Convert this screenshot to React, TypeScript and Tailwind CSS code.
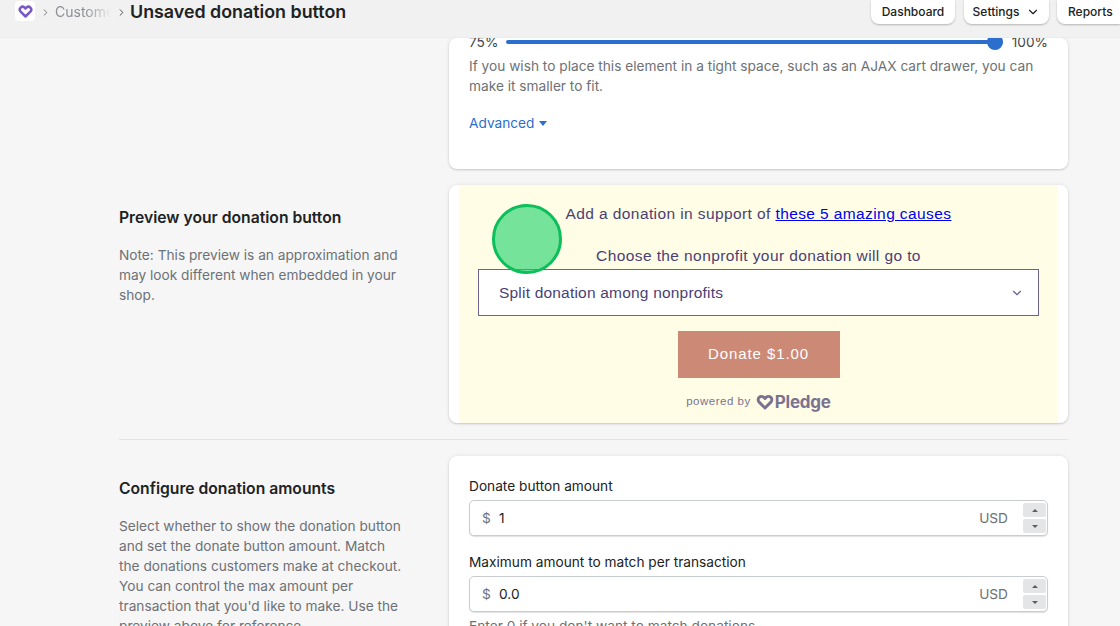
import { ChevronDown, ChevronRight } from 'lucide-react'

function HeartLogo({ className }: { className: string }) {
  return (
    <svg viewBox="0 0 24 24" className={className} fill="none" stroke="currentColor" strokeWidth="4" strokeLinejoin="round">
      <path d="M12 20 4.2 12.2a4.6 4.6 0 0 1 0-6.4 4.6 4.6 0 0 1 6.4 0L12 7.2l1.4-1.4a4.6 4.6 0 0 1 6.4 0 4.6 4.6 0 0 1 0 6.4L12 20Z" />
    </svg>
  )
}

function Section({ title, children, card, cardClass }: { title: string; children: React.ReactNode; card: React.ReactNode; cardClass: string }) {
  return (
    <div className="flex">
      <div className="w-[330px] shrink-0 pr-[45px] pt-[23px]">
        <h2 className="text-[15.7px] leading-[20px] font-semibold text-[#202223]">{title}</h2>
        {children}
      </div>
      <div className={`w-[619px] rounded-lg bg-white shadow-[0_0_4px_rgba(23,24,24,0.08),0_1px_2px_rgba(0,0,0,0.15)] ${cardClass}`}>{card}</div>
    </div>
  )
}

function AmountField({ label, value }: { label: string; value: string }) {
  return (
    <div>
      <div className="text-[13.7px] leading-[20px] text-[#202223]">{label}</div>
      <div className="mt-[4px] flex h-[36px] items-center rounded-[5px] border border-[#c9cccf] bg-white pl-[12px] pr-[1px] text-[13.7px] shadow-[0_1px_1px_rgba(0,0,0,0.12)]">
        <span className="w-[17px] text-[#6d7175]">$</span>
        <span className="flex-1 text-[#202223]">{value}</span>
        <span className="mr-[15px] text-[#6d7175]">USD</span>
        <div className="flex w-[23px] flex-col gap-[2px]">
          <div className="flex h-[14px] items-center justify-center rounded-[2px] bg-[#e4e5e7]">
            <div className="h-0 w-0 border-x-[3px] border-b-[3px] border-x-transparent border-b-[#5c5f62]" />
          </div>
          <div className="flex h-[14px] items-center justify-center rounded-[2px] bg-[#e4e5e7]">
            <div className="h-0 w-0 border-x-[3px] border-t-[3px] border-x-transparent border-t-[#5c5f62]" />
          </div>
        </div>
      </div>
    </div>
  )
}

export default function App() {
  return (
    <div className="relative flex h-[626px] flex-col overflow-hidden bg-[#f6f6f7] font-['Inter',sans-serif] text-[#202223]">
      <header className="z-10 flex h-[38px] shrink-0 items-start border-b border-[#ebebeb] bg-[#f1f1f1] pl-[15px]">
        <div className="mt-[1px] flex h-[20px] w-[20px] items-center justify-center rounded-[4px] bg-white">
          <HeartLogo className="h-[15px] w-[15px] text-[#7b57c4]" />
        </div>
        <ChevronRight className="ml-[5px] mt-[7px] h-[11px] w-[11px] text-[#6d7175]" />
        <div className="ml-[4px] mt-[2px] w-[56px] overflow-hidden text-[14px] leading-[20px] whitespace-nowrap text-[#8c9196] [mask-image:linear-gradient(to_right,black_55%,transparent)]">Customers</div>
        <ChevronRight className="ml-[5px] mt-[7px] h-[11px] w-[11px] text-[#44474a]" />
        <h1 className="ml-[3px] text-[17.85px] leading-[24px] font-semibold text-[#202223]">Unsaved donation button</h1>
        <nav className="ml-auto flex text-[12px] font-medium text-[#202223]">
          <button className="flex h-[24px] w-[84px] items-center justify-center rounded-b-[8px] bg-white shadow-[0_1px_2px_rgba(0,0,0,0.25)]">Dashboard</button>
          <button className="ml-[9px] flex h-[24px] w-[85px] items-center justify-center gap-[7px] rounded-b-[8px] bg-white shadow-[0_1px_2px_rgba(0,0,0,0.25)]">
            Settings <ChevronDown className="h-[14px] w-[14px]" />
          </button>
          <button className="ml-[8px] flex h-[24px] w-[63px] items-center rounded-bl-[8px] bg-white pl-[11px] shadow-[0_1px_2px_rgba(0,0,0,0.25)]">Reports</button>
        </nav>
      </header>

      <main className="flex flex-col pl-[119px]">
        <Section
          title=""
          cardClass="h-[131px] px-[20px]"
          card={
            <div>
              <div className="-mt-[6px] flex h-[20px] items-center text-[13.7px] text-[#44474a]">
                <span className="w-[37px]">75%</span>
                <div className="relative h-[4px] w-[498px] rounded-full bg-[#2c6ecb]">
                  <div className="absolute -top-[6px] right-0 h-[16px] w-[16px] rounded-full bg-[#2c6ecb]" />
                </div>
                <span className="ml-[9px]">100%</span>
              </div>
              <p className="mt-[4px] text-[13.7px] leading-[20px] text-[#6d7175]">
                If you wish to place this element in a tight space, such as an AJAX cart drawer, you can make it smaller to fit.
              </p>
              <div className="mt-[17px] flex items-center gap-[5px] text-[13.7px] leading-[20px] text-[#2c6ecb]">
                Advanced
                <div className="mt-[1px] h-0 w-0 border-x-[4.5px] border-t-[5px] border-x-transparent border-t-[#2c6ecb]" />
              </div>
            </div>
          }
        >
          {null}
        </Section>

        <div className="mt-[16px]">
          <Section
            title="Preview your donation button"
            cardClass="h-[238px] px-[10px]"
            card={
              <div className="flex h-full flex-col items-center bg-[#fffde6] px-[19px] font-['Liberation_Sans',sans-serif] text-[15.5px] tracking-[0.4px] text-[#4a3f75]">
                <p className="mt-[19px] leading-[20px]">
                  Add a donation in support of <a className="font-medium text-[#0000ee] underline">these 5 amazing causes</a>
                </p>
                <p className="mt-[22px] leading-[20px]">Choose the nonprofit your donation will go to</p>
                <div className="mt-[3px] flex h-[47px] w-full items-center justify-between border border-[#6b6390] bg-white pl-[20px] pr-[14px] tracking-[0.2px]">
                  Split donation among nonprofits
                  <ChevronDown className="h-[14px] w-[14px] text-[#6b6390]" />
                </div>
                <button className="mt-[15px] h-[47px] w-[162px] bg-[#cc8975] text-[15px] tracking-[0.9px] text-white">Donate $1.00</button>
                <div className="mt-[14px] flex items-center text-[11.5px] tracking-[0.5px] text-[#7b7292]">
                  powered by
                  <HeartLogo className="ml-[5px] h-[18px] w-[18px]" />
                  <span className="ml-[1px] font-['Inter',sans-serif] text-[17px] leading-[20px] font-bold tracking-[-0.2px]">Pledge</span>
                </div>
              </div>
            }
          >
            <p className="mt-[17px] text-[13.7px] leading-[20px] text-[#6d7175]">
              Note: This preview is an approximation and may look different when embedded in your shop.
            </p>
          </Section>
        </div>

        <div className="mt-[16px] w-[949px] border-t border-[#e1e3e5]" />

        <div className="mt-[16px]">
          <Section
            title="Configure donation amounts"
            cardClass="h-[200px] px-[20px] pt-[20px]"
            card={
              <div className="flex flex-col gap-[16px]">
                <AmountField label="Donate button amount" value="1" />
                <div>
                  <AmountField label="Maximum amount to match per transaction" value="0.0" />
                  <p className="mt-[4px] text-[13.7px] leading-[20px] text-[#6d7175]">Enter 0 if you don't want to match donations</p>
                </div>
              </div>
            }
          >
            <p className="mt-[17px] text-[13.7px] leading-[20px] text-[#6d7175]">
              Select whether to show the donation button and set the donate button amount. Match the donations customers make at checkout. You can control the max amount per transaction that you'd like to make. Use the preview above for reference.
            </p>
          </Section>
        </div>
      </main>

      <div className="absolute left-[492px] top-[204px] z-20 h-[70px] w-[70px] rounded-full border-[3px] border-[#0cbf5b] bg-[#19d367]/60" />
    </div>
  )
}
